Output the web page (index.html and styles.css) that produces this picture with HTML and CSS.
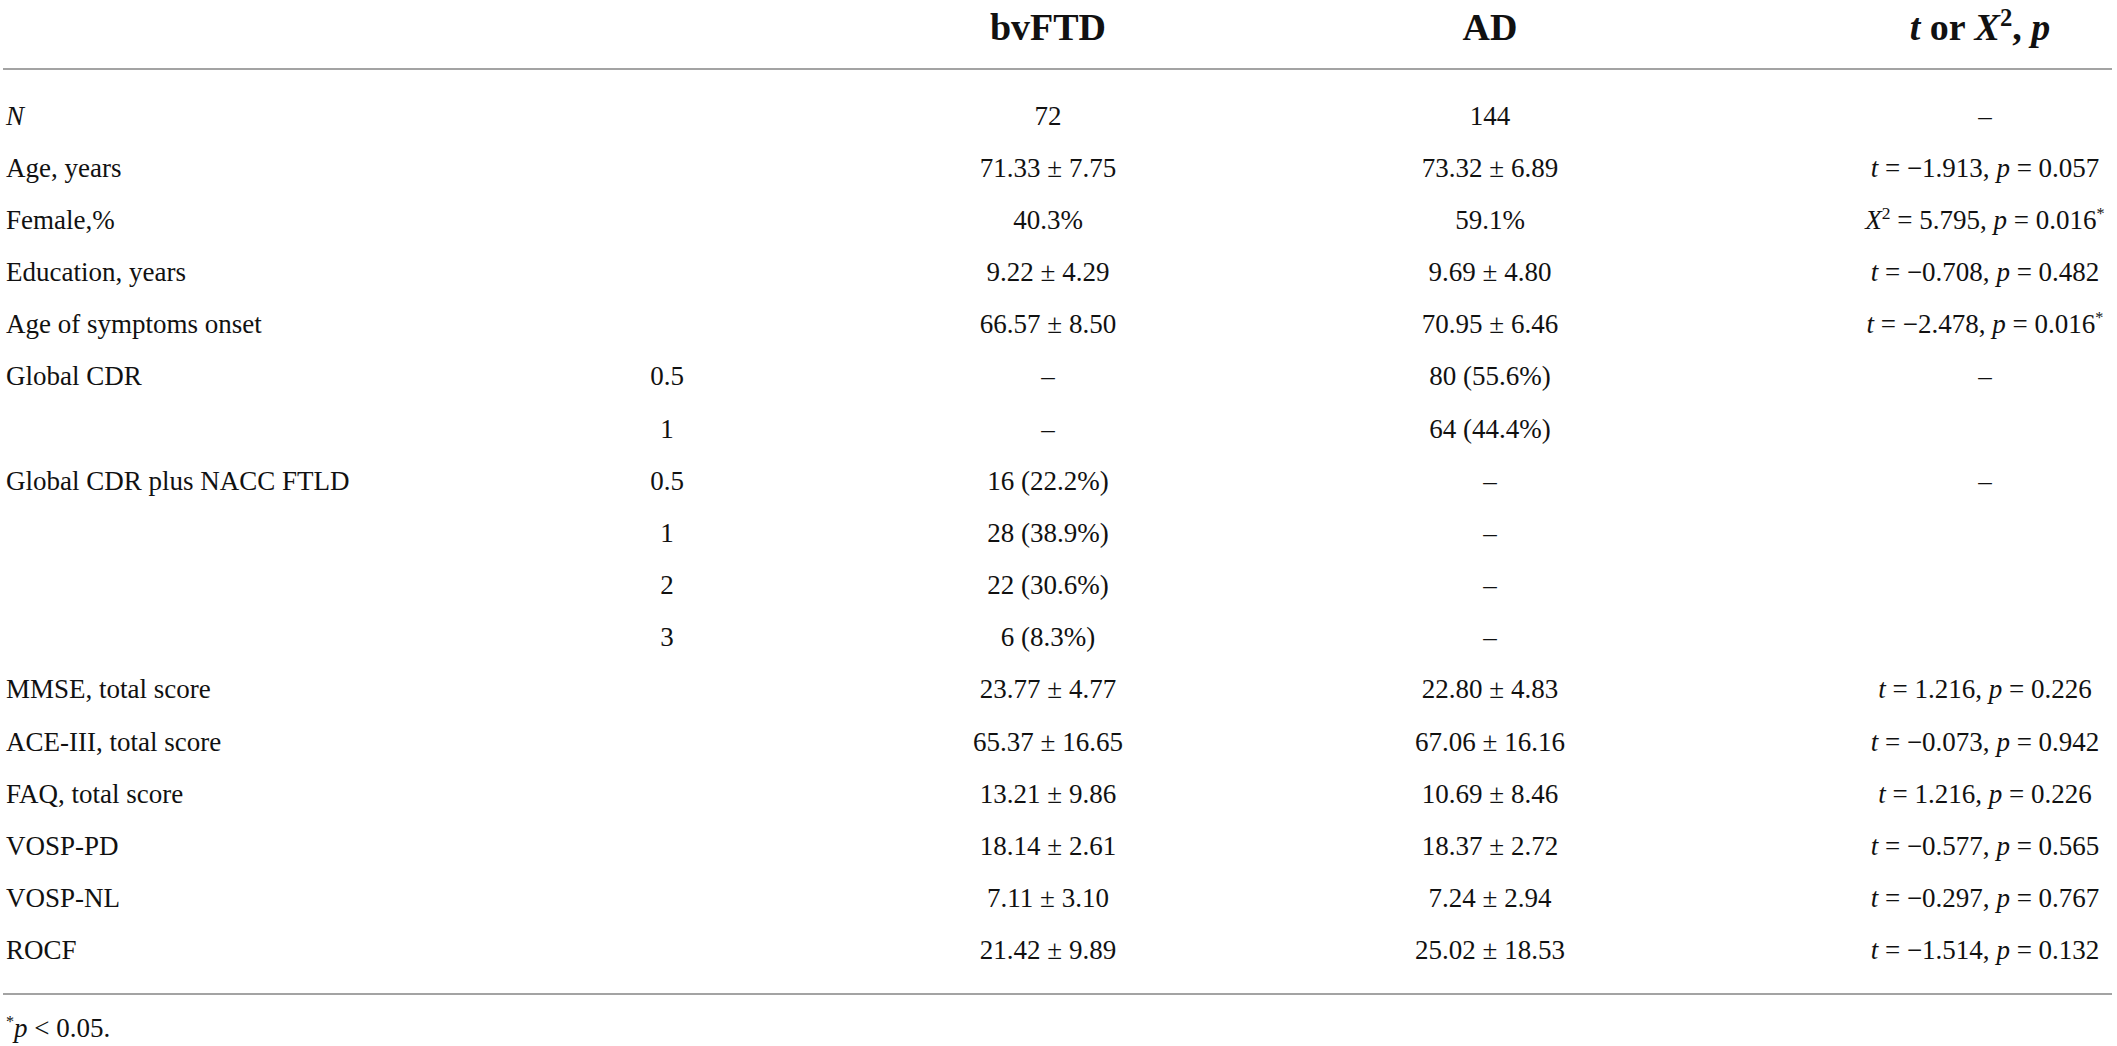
FILE: index.html
```html
<!DOCTYPE html>
<html>
<head>
<meta name="viewport" content="width=device-width, initial-scale=1">
<link rel="stylesheet" href="styles.css">
</head>
<body>

<div class="wrap">
  <table class="stats">
    <colgroup>
      <col class="c-label">
      <col class="c-level">
      <col class="c-ftd">
      <col class="c-ad">
      <col class="c-test">
    </colgroup>
    <thead>
      <tr>
        <th></th>
        <th></th>
        <th>bvFTD</th>
        <th>AD</th>
        <th class="test"><i>t</i> or <i>X</i><sup>2</sup>, <i>p</i></th>
      </tr>
    </thead>
    <tbody>
      <tr class="first">
        <td><i>N</i></td><td></td><td>72</td><td>144</td><td class="test">–</td>
      </tr>
      <tr>
        <td>Age, years</td><td></td><td>71.33 ± 7.75</td><td>73.32 ± 6.89</td>
        <td class="test"><i>t</i> = −1.913, <i>p</i> = 0.057</td>
      </tr>
      <tr>
        <td>Female,%</td><td></td><td>40.3%</td><td>59.1%</td>
        <td class="test"><i>X</i><sup>2</sup> = 5.795, <i>p</i> = 0.016<sup class="star">*</sup></td>
      </tr>
      <tr>
        <td>Education, years</td><td></td><td>9.22 ± 4.29</td><td>9.69 ± 4.80</td>
        <td class="test"><i>t</i> = −0.708, <i>p</i> = 0.482</td>
      </tr>
      <tr>
        <td>Age of symptoms onset</td><td></td><td>66.57 ± 8.50</td><td>70.95 ± 6.46</td>
        <td class="test"><i>t</i> = −2.478, <i>p</i> = 0.016<sup class="star">*</sup></td>
      </tr>
      <tr>
        <td>Global CDR</td><td>0.5</td><td>–</td><td>80 (55.6%)</td><td class="test">–</td>
      </tr>
      <tr>
        <td></td><td>1</td><td>–</td><td>64 (44.4%)</td><td class="test"></td>
      </tr>
      <tr>
        <td>Global CDR plus NACC FTLD</td><td>0.5</td><td>16 (22.2%)</td><td>–</td><td class="test">–</td>
      </tr>
      <tr>
        <td></td><td>1</td><td>28 (38.9%)</td><td>–</td><td class="test"></td>
      </tr>
      <tr>
        <td></td><td>2</td><td>22 (30.6%)</td><td>–</td><td class="test"></td>
      </tr>
      <tr>
        <td></td><td>3</td><td>6 (8.3%)</td><td>–</td><td class="test"></td>
      </tr>
      <tr>
        <td>MMSE, total score</td><td></td><td>23.77 ± 4.77</td><td>22.80 ± 4.83</td>
        <td class="test"><i>t</i> = 1.216, <i>p</i> = 0.226</td>
      </tr>
      <tr>
        <td>ACE-III, total score</td><td></td><td>65.37 ± 16.65</td><td>67.06 ± 16.16</td>
        <td class="test"><i>t</i> = −0.073, <i>p</i> = 0.942</td>
      </tr>
      <tr>
        <td>FAQ, total score</td><td></td><td>13.21 ± 9.86</td><td>10.69 ± 8.46</td>
        <td class="test"><i>t</i> = 1.216, <i>p</i> = 0.226</td>
      </tr>
      <tr>
        <td>VOSP-PD</td><td></td><td>18.14 ± 2.61</td><td>18.37 ± 2.72</td>
        <td class="test"><i>t</i> = −0.577, <i>p</i> = 0.565</td>
      </tr>
      <tr>
        <td>VOSP-NL</td><td></td><td>7.11 ± 3.10</td><td>7.24 ± 2.94</td>
        <td class="test"><i>t</i> = −0.297, <i>p</i> = 0.767</td>
      </tr>
      <tr class="last">
        <td>ROCF</td><td></td><td>21.42 ± 9.89</td><td>25.02 ± 18.53</td>
        <td class="test"><i>t</i> = −1.514, <i>p</i> = 0.132</td>
      </tr>
    </tbody>
  </table>

  <p class="note"><sup class="star">*</sup><i>p</i> &lt; 0.05.</p>
</div>

</body>
</html>
```

FILE: styles.css
```css
body {
    margin: 0;
    background-color: white;
    color: #111;
    font-family: "Liberation Serif", "Times New Roman", serif;
}

* {
    box-sizing: border-box;
}

.wrap {
    padding: 0 5px 0 3px;
}

.stats {
    width: 100%;
    border-collapse: collapse;
    font-size: 27px;
}

.c-label { width: 557px; }
.c-level { width: 214px; }
.c-ftd   { width: 548px; }
.c-ad    { width: 336px; }

.stats th {
    height: 69px;
    padding: 0 10px 14px;
    font-size: 38px;
    font-weight: bold;
    text-align: center;
    vertical-align: middle;
    border-bottom: 2px solid #a3a3a3;
}

.stats td {
    height: 52.2px;
    padding: 0 10px;
    text-align: center;
    vertical-align: middle;
    white-space: nowrap;
}

.stats td:first-child {
    text-align: left;
    padding-left: 3px;
}

.stats td.test {
    padding-left: 200px;
    padding-right: 0;
}

.stats th.test {
    padding-left: 190px;
    padding-right: 0;
}

.stats tr.first td {
    height: 73px;
    padding-top: 21px;
}

.stats tr.last td {
    height: 69px;
    padding-bottom: 16px;
    border-bottom: 2px solid #a3a3a3;
}

sup {
    font-size: 0.65em;
    line-height: 0;
}

.star {
    font-size: 0.6em;
}

.note {
    margin: 18px 0 0 3px;
    font-size: 27px;
}
```
